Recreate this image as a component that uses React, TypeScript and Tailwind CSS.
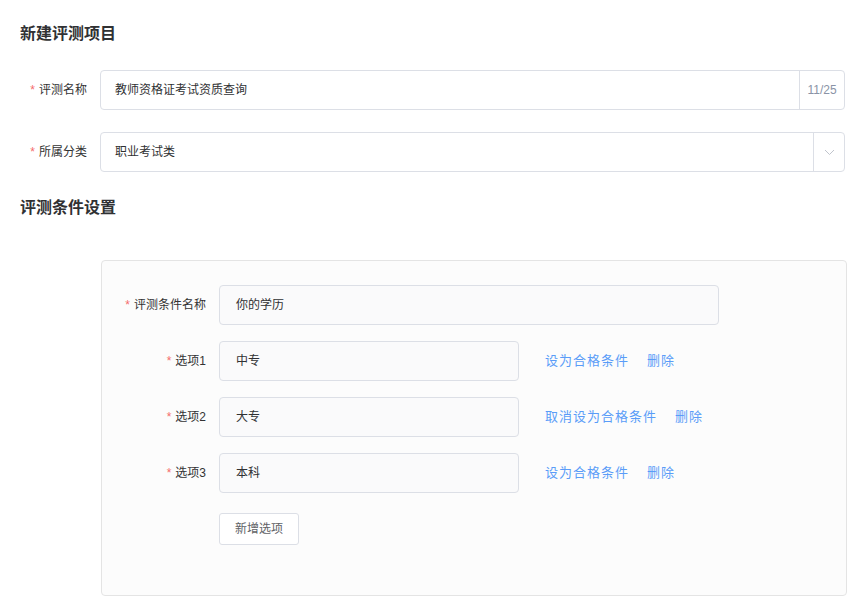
import React from 'react'

const font = { fontFamily: '"Liberation Sans", "Noto Sans CJK SC", sans-serif' }

function Label({ text, width }: { text: string; width: string }) {
  return (
    <div className={`${width} shrink-0 flex items-center justify-end pr-[13px] text-[12px] text-[#333]`}>
      <span className="text-[#f56c6c] mr-[4px]">*</span>
      {text}
    </div>
  )
}

const options = [
  { value: '中专', qualified: false },
  { value: '大专', qualified: true },
  { value: '本科', qualified: false },
]

export default function App() {
  return (
    <div className="w-[860px] h-[602px] bg-white pl-[20px] pt-[22px] overflow-hidden" style={font}>
      <h2 className="text-[16px] leading-[24px] font-bold text-[#303133]">新建评测项目</h2>

      {/* Basic info */}
      <div className="mt-[24px] -ml-[20px] flex flex-col gap-[22px]">
        <div className="flex h-[40px]">
          <Label text="评测名称" width="w-[100px]" />
          <div className="w-[745px] flex border border-[#dcdfe6] rounded-[4px] bg-white">
            <div className="flex-1 flex items-center pl-[14px] text-[12px] text-[#303133]">教师资格证考试资质查询</div>
            <div className="w-[45px] border-l border-[#dcdfe6] flex items-center justify-center text-[12px] text-[#8a93a6]">
              11/25
            </div>
          </div>
        </div>
        <div className="flex h-[40px]">
          <Label text="所属分类" width="w-[100px]" />
          <div className="w-[745px] flex border border-[#dcdfe6] rounded-[4px] bg-white">
            <div className="flex-1 flex items-center pl-[14px] text-[12px] text-[#303133]">职业考试类</div>
            <div className="w-[31px] border-l border-[#dcdfe6] flex items-center justify-center">
              <svg width="11" height="7" viewBox="0 0 11 7" fill="none">
                <path d="M1 1l4.5 4.5L10 1" stroke="#c0c4cc" strokeWidth="1" />
              </svg>
            </div>
          </div>
        </div>
      </div>

      <h2 className="mt-[24px] text-[16px] leading-[24px] font-bold text-[#303133]">评测条件设置</h2>

      {/* Conditions panel */}
      <div className="mt-[40px] ml-[81px] w-[746px] h-[336px] border border-[#e4e4e4] rounded-[4px] bg-[#fcfcfc] pt-[24px]">
        <div className="flex flex-col gap-[16px]">
          <div className="flex h-[40px]">
            <Label text="评测条件名称" width="w-[117px]" />
            <div className="w-[500px] border border-[#dcdfe6] rounded-[4px] bg-[#fafafb] flex items-center pl-[16px] text-[12px] text-[#303133]">
              你的学历
            </div>
          </div>
          {options.map((o, i) => (
            <div key={i} className="flex h-[40px]">
              <Label text={`选项${i + 1}`} width="w-[117px]" />
              <div className="w-[300px] border border-[#dcdfe6] rounded-[4px] bg-[#fafafb] flex items-center pl-[16px] text-[12px] text-[#303133]">
                {o.value}
              </div>
              <div className="ml-[26px] flex items-center gap-[18px] text-[13px] tracking-[1px] text-[#5a9cf8]">
                <span>{o.qualified ? '取消设为合格条件' : '设为合格条件'}</span>
                <span>删除</span>
              </div>
            </div>
          ))}
        </div>
        <div className="mt-[20px] ml-[117px]">
          <button className="w-[80px] h-[32px] border border-[#dcdfe6] rounded-[3px] bg-white text-[12px] text-[#606266]">
            新增选项
          </button>
        </div>
      </div>
    </div>
  )
}
